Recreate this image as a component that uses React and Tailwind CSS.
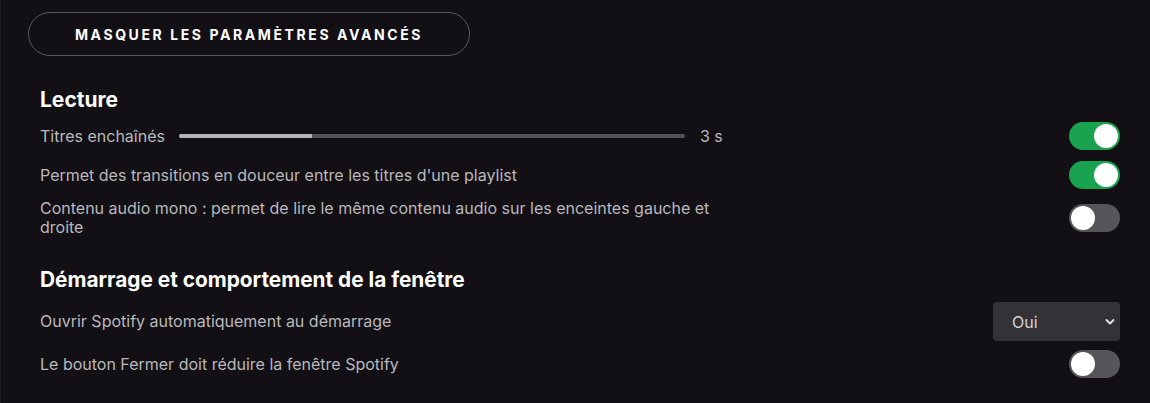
import { useState } from "react";

const label = "text-[16px] leading-[19px] text-[#b9b8bc]";

function Toggle({ on, onChange }) {
  return (
    <button
      onClick={() => onChange(!on)}
      className={`shrink-0 w-[51px] h-[28px] rounded-full p-[2px] flex items-center transition-colors ${on ? "bg-[#1aa34e] justify-end" : "bg-[#56555a] justify-start"}`}
    >
      <span className="block w-[24px] h-[24px] rounded-full bg-white" />
    </button>
  );
}

export default function App() {
  const [toggles, setToggles] = useState({ crossfade: true, automix: true, mono: false, close: false });
  const [startup, setStartup] = useState("Oui");

  function flip(k, v) {
    setToggles(p => ({ ...p, [k]: v }));
  }

  return (
    <div
      className="w-[1150px] h-[403px] bg-[#121014] border-l border-[#1d1b20] overflow-hidden"
      style={{ fontFamily: "Inter, 'Liberation Sans', sans-serif" }}
    >
      <div className="pt-[12px] pl-[27px]">
        <button className="w-[442px] h-[44px] rounded-full border border-[#58575b] text-white text-[14px] font-bold tracking-[0.185em] uppercase">
          Masquer les paramètres avancés
        </button>
      </div>

      <div className="pl-[39px] pr-[30px]">
        {/* Lecture */}
        <h2 className="mt-[32px] text-[21px] leading-[24px] font-bold text-white">Lecture</h2>

        <div className="mt-[10px] h-[28px] flex items-center justify-between">
          <div className="flex items-center">
            <span className={label}>Titres enchaînés</span>
            <div className="ml-[14px] w-[506px] h-[4px] rounded-full bg-[#535256] overflow-hidden">
              <div className="h-full w-[133px] bg-[#b3b2b6]" />
            </div>
            <span className={`${label} ml-[15px]`}>3 s</span>
          </div>
          <Toggle on={toggles.crossfade} onChange={v => flip("crossfade", v)} />
        </div>

        <div className="mt-[11px] h-[28px] flex items-center justify-between">
          <span className={label}>Permet des transitions en douceur entre les titres d'une playlist</span>
          <Toggle on={toggles.automix} onChange={v => flip("automix", v)} />
        </div>

        <div className="mt-[10px] flex items-center justify-between">
          <span className={`${label} max-w-[690px]`}>
            Contenu audio mono : permet de lire le même contenu audio sur les enceintes gauche et droite
          </span>
          <Toggle on={toggles.mono} onChange={v => flip("mono", v)} />
        </div>

        {/* Démarrage */}
        <h2 className="mt-[31px] text-[20.8px] leading-[24px] font-bold text-white">
          Démarrage et comportement de la fenêtre
        </h2>

        <div className="mt-[10px] h-[39px] flex items-center justify-between">
          <span className={label}>Ouvrir Spotify automatiquement au démarrage</span>
          <div className="relative w-[127px] h-[39px]">
            <select
              value={startup}
              onChange={e => setStartup(e.target.value)}
              className="appearance-none w-full h-full rounded-[4px] bg-[#333237] pl-[19px] text-[16px] text-[#d4d3d7] outline-none"
            >
              <option value="Non">Non</option>
              <option value="Oui">Oui</option>
              <option value="Réduire">Réduire</option>
            </select>
            <svg
              className="pointer-events-none absolute right-[5px] top-[16px] w-[10px] h-[8px]"
              viewBox="0 0 10 8"
              fill="none"
              stroke="#e6e5e9"
              strokeWidth="1.8"
              strokeLinecap="round"
              strokeLinejoin="round"
            >
              <path d="M1.5 2 5 5.5 8.5 2" />
            </svg>
          </div>
        </div>

        <div className="mt-[9px] h-[28px] flex items-center justify-between">
          <span className={label}>Le bouton Fermer doit réduire la fenêtre Spotify</span>
          <Toggle on={toggles.close} onChange={v => flip("close", v)} />
        </div>
      </div>
    </div>
  );
}
